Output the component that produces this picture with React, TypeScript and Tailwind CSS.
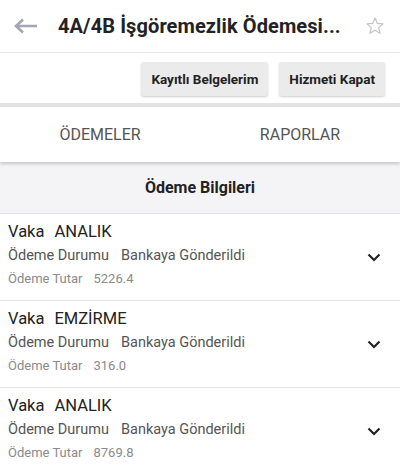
const items = [
  { vaka: "ANALIK", durum: "Bankaya Gönderildi", tutar: "5226.4" },
  { vaka: "EMZİRME", durum: "Bankaya Gönderildi", tutar: "316.0" },
  { vaka: "ANALIK", durum: "Bankaya Gönderildi", tutar: "8769.8" },
];

const PaymentRow = ({ vaka, durum, tutar }: { vaka: string; durum: string; tutar: string }) => {
  return (
    <div className="flex items-center h-[87px] pl-2 pr-[19px] border-b border-[#e4e4e4] bg-white">
      <div className="flex-1 flex flex-col self-start pt-[6px]">
        <div className="h-[24px] leading-[24px] text-[16.5px] text-[#222]">
          Vaka<span className="ml-[10px]">{vaka}</span>
        </div>
        <div className="h-[24px] leading-[24px] text-[14.5px] text-[#555]">
          Ödeme Durumu<span className="ml-[12px]">{durum}</span>
        </div>
        <div className="h-[22px] leading-[22px] text-[13px] text-[#8a8a8a]">
          Ödeme Tutar<span className="ml-[11px]">{tutar}</span>
        </div>
      </div>
      {/* chevron */}
      <svg width="14" height="9" viewBox="0 0 14 9" className="mt-[1px]">
        <path d="M1.5 1.5 L7 7 L12.5 1.5" fill="none" stroke="#222" strokeWidth="2.2" />
      </svg>
    </div>
  );
};

const App = () => {
  return (
    <div className="w-[400px] h-[473px] overflow-hidden bg-white font-['Roboto',sans-serif]">
      {/* Header */}
      <div className="flex items-center h-[53px] border-b border-[#e6e6e6]">
        <svg width="24" height="16" viewBox="0 0 24 16" className="ml-[14px]">
          <path d="M9 1.5 L2 8 L9 14.5 M2 8 H23" fill="none" stroke="#a3a6b8" strokeWidth="2.6" />
        </svg>
        <div className="ml-[20px] flex-1 text-[20px] tracking-[0.1px] font-bold text-[#222] whitespace-nowrap">
          4A/4B İşgöremezlik Ödemesi...
        </div>
        <svg width="20" height="20" viewBox="0 0 24 24" className="mr-[15px]">
          <path
            d="M12 2.5 L14.8 8.9 L21.6 9.5 L16.4 14 L18 20.8 L12 17.2 L6 20.8 L7.6 14 L2.4 9.5 L9.2 8.9 Z"
            fill="none"
            stroke="#c2c2c2"
            strokeWidth="1.4"
            strokeLinejoin="round"
          />
        </svg>
      </div>

      {/* Action buttons */}
      <div className="flex justify-end gap-[11px] pt-[9px] pr-[15px] h-[54px] bg-white border-b-[4px] border-[#e3e3e3]">
        <button className="h-[34px] px-[10px] rounded-[3px] bg-[#ebebeb] shadow-[0_1px_2px_rgba(0,0,0,0.2)] text-[13.5px] font-bold text-[#222]">
          Kayıtlı Belgelerim
        </button>
        <button className="h-[34px] px-[10px] rounded-[3px] bg-[#ebebeb] shadow-[0_1px_2px_rgba(0,0,0,0.2)] text-[13.5px] font-bold text-[#222]">
          Hizmeti Kapat
        </button>
      </div>

      {/* Tabs */}
      <div className="relative z-10 flex h-[55px] bg-white shadow-[0_2px_3px_rgba(0,0,0,0.18)]">
        <div className="flex-1 flex items-center justify-center text-[16px] text-[#555]">ÖDEMELER</div>
        <div className="flex-1 flex items-center justify-center text-[16px] text-[#555]">RAPORLAR</div>
      </div>

      {/* Section title */}
      <div className="flex items-center justify-center h-[52px] bg-[#f4f4f6] border-b border-[#e4e4e4] text-[16px] font-bold text-[#222]">
        Ödeme Bilgileri
      </div>

      {items.map((it, i) => (
        <PaymentRow key={i} {...it} />
      ))}
    </div>
  );
};

export default App;
